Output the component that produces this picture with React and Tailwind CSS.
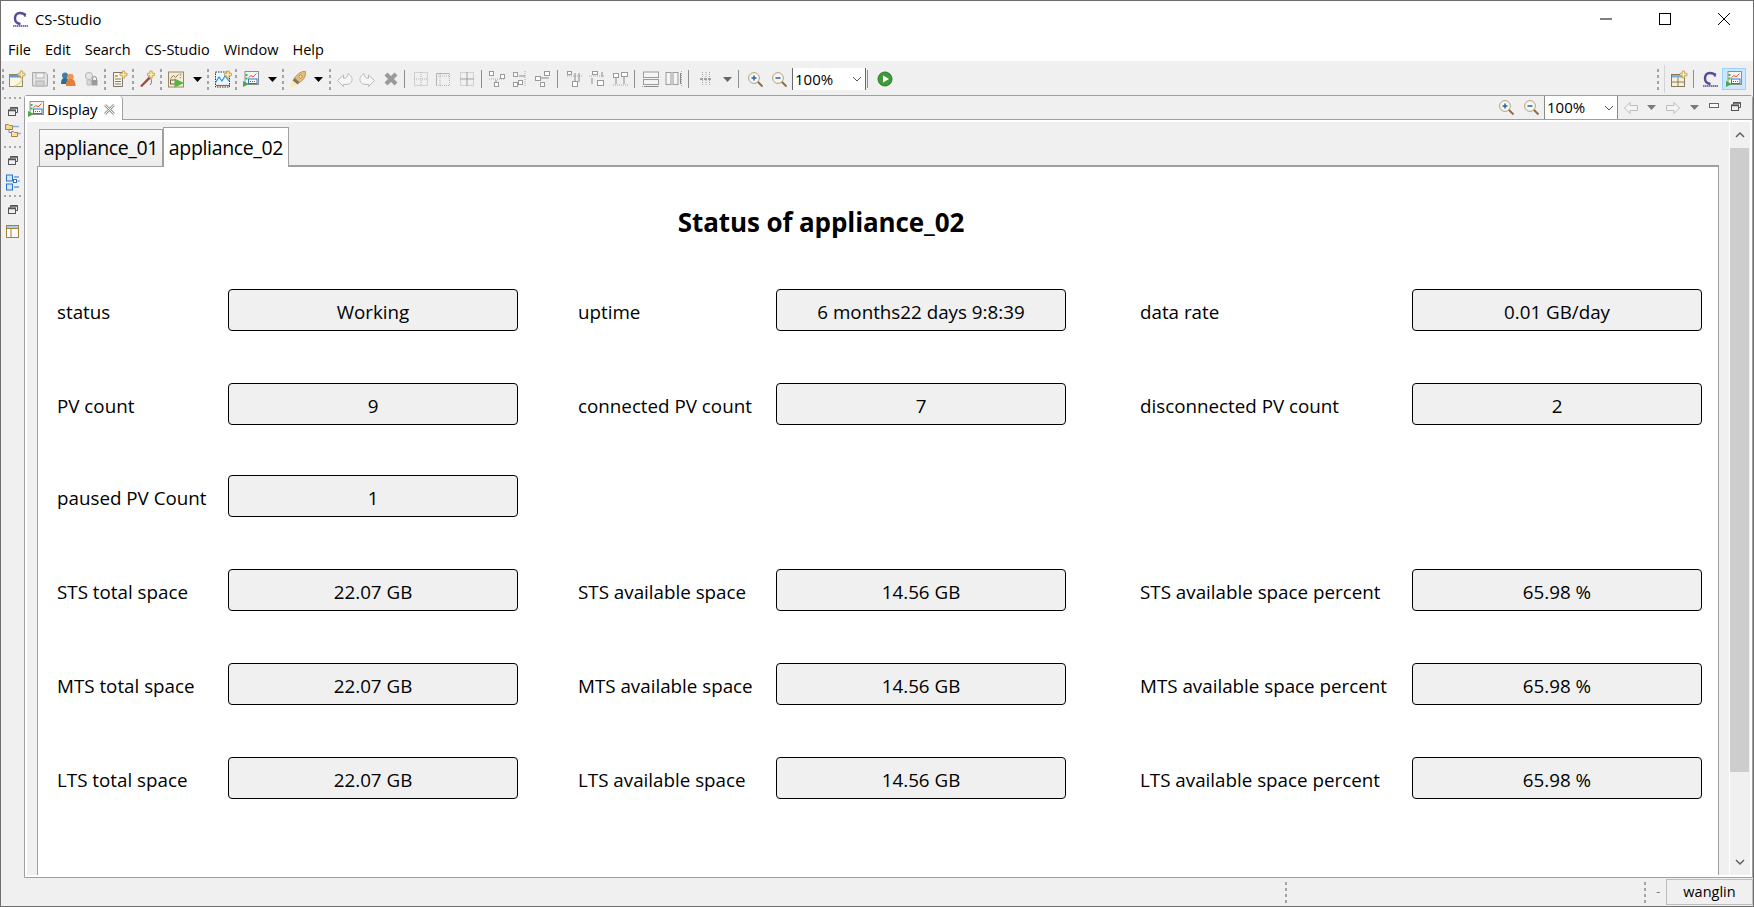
import React from "react";

const F = "font-['Open_Sans',sans-serif]";

function Grip({ className = "" }) {
  return (
    <div className={`flex flex-col shrink-0 items-center justify-center gap-[3px] w-[2px] h-[22px] ${className}`}>
      <div className="w-[2px] h-[3px] bg-[#a3a3a3]" />
      <div className="w-[2px] h-[3px] bg-[#a3a3a3]" />
      <div className="w-[2px] h-[3px] bg-[#a3a3a3]" />
      <div className="w-[2px] h-[3px] bg-[#a3a3a3]" />
    </div>
  );
}
function Sep({ className = "" }) {
  return <div className={`shrink-0 w-[1px] h-[18px] bg-[#8e8e8e] ${className}`} />;
}
function Slot({ className = "", children }) {
  return <div className={`flex shrink-0 items-center justify-center h-[24px] ${className}`}>{children}</div>;
}
function Svg({ children, w = 16, h = 16, vb }) {
  return (
    <svg width={w} height={h} viewBox={vb || `0 0 ${w} ${h}`} className="shrink-0 overflow-visible" fill="none">
      {children}
    </svg>
  );
}
const Star = ({ x = 12, y = 3 }) => (
  <g>
    <path d={`M${x - 1.2} ${y - 3.5}h2.4v2.3h2.3v2.4h-2.3v2.3h-2.4v-2.3h-2.3v-2.4h2.3z`} fill="#f6e9b2" stroke="#c09a3c" strokeWidth="0.8" />
  </g>
);
const NewDisplay = () => (
  <Svg>
    <rect x="0.5" y="3.5" width="13" height="12" fill="#fdf8e4" stroke="#8a8a70" />
    <rect x="1" y="4" width="12" height="2.5" fill="#5d9bd8" />
    <path d="M13 8Q12 13 5 15" stroke="#eed98a" strokeWidth="1.4" />
    <Star x={12.5} y={3.5} />
  </Svg>
);
const Floppy = () => (
  <Svg>
    <path d="M0.5 1.5h13l2 2v11.5h-15z" fill="#e2e2e2" stroke="#a8a8a8" />
    <rect x="4" y="2" width="8" height="5" fill="#f4f4f4" stroke="#b3b3b3" />
    <rect x="4" y="10" width="8" height="5" fill="#d2d2d2" stroke="#b3b3b3" />
  </Svg>
);
const People = () => (
  <Svg>
    <circle cx="5" cy="4.5" r="3" fill="#3e7fa8" />
    <path d="M1 13c0-5 1.5-6 4-6s3.5 1 3.5 6z" fill="#2f6c94" />
    <circle cx="10.5" cy="6" r="3.2" fill="#ee9652" />
    <path d="M6 15c0-6 2-7 4.5-7s5 1 5 7z" fill="#e57f39" />
  </Svg>
);
const PersonLock = () => (
  <Svg>
    <circle cx="6" cy="5" r="3.6" fill="#e6e6e6" stroke="#b3b3b3" />
    <path d="M4 9h4v5H4z" fill="#dadada" stroke="#bdbdbd" />
    <path d="M9.5 9V7.5a2 2 0 014 0V9" stroke="#909090" />
    <rect x="8.5" y="9" width="6" height="5.5" fill="#9b9b9b" />
  </Svg>
);
const NewDoc = () => (
  <Svg>
    <path d="M2.5 1.5h9v14h-9z" fill="#fbf8ea" stroke="#77776a" />
    <path d="M4 5h3M4 8h6M4 10.5h6M4 13h6" stroke="#7b7b6e" />
    <rect x="4" y="4" width="2.5" height="2" fill="#d1a83a" />
    <Star x={12.5} y={3.5} />
  </Svg>
);
const Pen = () => (
  <Svg>
    <path d="M1 15L10 5.5l1.8 1.8L3 16z" fill="#a5483a" />
    <path d="M10 5.5l1.8 1.8" stroke="#6f6f6f" />
    <path d="M12 8c1 2 .5 5-1 6" stroke="#7a7a7a" />
    <Star x={12} y={3.5} />
  </Svg>
);
const RunBox = () => (
  <Svg>
    <rect x="0.5" y="1" width="15" height="15" fill="#f5ecd8" stroke="#9a8662" />
    <path d="M2.5 7.5l3-3 2 2 3-3" stroke="#8a7a58" />
    <rect x="2.5" y="9" width="5" height="4" fill="none" stroke="#6b6248" />
    <path d="M12.5 2.5v2M12.5 6v1" stroke="#a99a72" strokeWidth="1.5" />
    <path d="M6.5 7.5l9.5 4.5-9.5 4.5z" fill="#53b53f" />
  </Svg>
);
const ChartStar = () => (
  <Svg w={17} h={17}>
    <rect x="0.5" y="1" width="14" height="15" fill="#eef5fb" stroke="#333" strokeDasharray="1.5 1" />
    <path d="M1 11l3-5 3 4 3-5 4 5" stroke="#2a8fe0" strokeWidth="1.2" />
    <path d="M1 14.5h14" stroke="#d9483a" strokeWidth="1.2" />
    <Star x={13} y={3.5} />
  </Svg>
);
const DisplayIcon = () => (
  <Svg w={16} h={16}>
    <rect x="2" y="0.5" width="13.5" height="13" fill="#f5f5f5" stroke="#8e8e8e" />
    <path d="M5.5 6.5l2.5-2 2 1.5 3.5-3.5" stroke="#e4562a" />
    <rect x="5.5" y="8" width="8.5" height="4.5" fill="#fff" stroke="#2a76cf" />
    <path d="M7 10.5h1M9 10.5h1M11 10.5h1" stroke="#2a76cf" />
    <rect x="2.5" y="3" width="2" height="2" fill="#3eb33e" />
    <rect x="2.5" y="6.5" width="2" height="2" fill="#3eb33e" />
    <path d="M0 10l6 3-6 3z" fill="#4ba84b" />
  </Svg>
);
const Rocket = () => (
  <Svg>
    <path d="M15.500 .5c.5 3.500-1 8-6 11L4.500 7C8 2 12 0 15.500 .5z" fill="#e6bd77" stroke="#a8854a" strokeWidth="0.8" />
    <circle cx="10.500" cy="5.500" r="1.500" fill="#fff3d6" stroke="#8a6c35" strokeWidth="0.7" />
    <path d="M4.500 7L9.500 11.500l-2 2-5-4z" fill="#7c7468" />
    <path d="M2.500 9.500l5 4c-2.500 2-5 2.500-7 2.500C.5 14 1 11.500 2.500 9.500z" fill="#fbeaae" />
  </Svg>
);
const Undo = ({ flip }) => (
  <Svg>
    <g transform={flip ? "translate(16,0) scale(-1,1)" : undefined}>
      <path d="M.5 9.500L6.500 4v3.500C9 7.500 10.500 6 11 2.500c3.500 2 5 5.500 3.500 8.500-1.500 2.500-4.500 2.500-8 2.500V15.500z" fill="#f6f6f6" stroke="#bcbcbc" />
    </g>
  </Svg>
);
const GrayX = () => (
  <Svg>
    <path d="M3 3l10 10M13 3L3 13" stroke="#9a9a9a" strokeWidth="4.2" />
  </Svg>
);
const D = "#b3b3b3";
const Grid1 = () => (
  <Svg>
    <rect x="1.500" y="1.500" width="13" height="13" stroke={D} strokeDasharray="1 1" />
    <path d="M8 1v14M1 8h14" stroke={D} strokeDasharray="1 1" />
  </Svg>
);
const Grid2 = () => (
  <Svg>
    <path d="M1.500 14V2.500h13" stroke={D} strokeWidth="1" />
    <path d="M1 5h14M5 3v12M14.500 3v12M1 14.500h14" stroke={D} strokeDasharray="1 1" />
  </Svg>
);
const Grid3 = () => (
  <Svg>
    <rect x="1.500" y="1.500" width="13" height="13" stroke={D} strokeDasharray="1 1" />
    <path d="M8 1v14M1 8h14" stroke="#a0a0a0" />
  </Svg>
);
const Al = ({ a, children }) => (
  <Svg>
    {a.map((r, i) => (
      <rect key={i} x={r[0] + 0.5} y={r[1] + 0.5} width={r[2]} height={r[3]} fill="#fff" stroke="#999" />
    ))}
    {children}
  </Svg>
);
const Dash = ({ d }) => <path d={d} stroke="#a8a8a8" strokeDasharray="1 1" />;
const Arr = ({ d }) => <path d={d} stroke="#8a8a8a" />;
const Bar1 = () => (
  <Svg w={18} h={16}>
    <rect x="1.500" y="1" width="15" height="5.500" fill="#f4f4f4" stroke="#9c9c9c" />
    <rect x="1.500" y="8.500" width="15" height="5" fill="#f4f4f4" stroke="#9c9c9c" />
    <Dash d="M0 15.500h18" />
    <Arr d="M2 15.500h14" />
  </Svg>
);
const Bar2 = () => (
  <Svg w={18} h={16}>
    <rect x="1" y="1.500" width="5" height="12" fill="#f4f4f4" stroke="#9c9c9c" />
    <rect x="8" y="1.500" width="5" height="12" fill="#f4f4f4" stroke="#9c9c9c" />
    <Dash d="M16.500 0v16" />
    <Arr d="M15.500 2v11" />
  </Svg>
);
const Center = () => (
  <Svg w={18} h={16}>
    <Dash d="M5.500 1v14M9 1v14M12.500 1v14" />
    <path d="M3 8h12" stroke="#a0a0a0" strokeWidth="2" strokeDasharray="3 1" />
  </Svg>
);
const Drop = ({ c = "#000" }) => (
  <Svg w={9} h={5}>
    <path d="M0 0h9L4.500 5z" fill={c} />
  </Svg>
);
const Mag = ({ plus }) => (
  <Svg w={15} h={15}>
    <path d="M9.500 9.500l5 5" stroke="#8a6b3e" strokeWidth="1.800" />
    <circle cx="6" cy="6" r="5.400" fill="#f6f6f2" stroke="#b5a47a" />
    <path d="M3.500 6h5" stroke="#2f5fa8" strokeWidth="1.500" />
    {plus && <path d="M6 3.500v5" stroke="#2f5fa8" strokeWidth="1.500" />}
  </Svg>
);
const RunCircle = () => (
  <Svg>
    <circle cx="8" cy="8" r="7" fill="#3f9a3a" stroke="#2a7a2a" />
    <path d="M6 4.500L12 8l-6 3.500z" fill="#fff" />
  </Svg>
);
const Logo = ({ s = 17 }) => (
  <Svg w={s} h={s} vb="0 0 17 17">
    <path d="M13.500 4.500C12 2.500 10 2 8 2 4.500 2 3 4.500 3 7.500s1.500 5 5.500 5.500" stroke="#564a9a" strokeWidth="2.400" />
    <path d="M13 2v4" stroke="#564a9a" strokeWidth="1.200" />
    <path d="M1 15h15" stroke="#4a4a9a" strokeWidth="1.500" strokeDasharray="1.500 .5" />
  </Svg>
);
const TableStar = () => (
  <Svg>
    <rect x="0.500" y="3.500" width="13" height="12" fill="#f7f1dc" stroke="#8a7a55" />
    <rect x="1" y="4" width="12" height="2.500" fill="#7db0dd" />
    <path d="M7 6.500v9M1 11h12" stroke="#8a7a55" />
    <Star x={12.500} y={3.500} />
  </Svg>
);
const Restore = () => (
  <Svg w={10} h={9}>
    <path d="M2.500 2.500V.5h7v5H8" stroke="#555" />
    <path d="M2.500 1h7" stroke="#555" strokeWidth="1.500" />
    <rect x="0.500" y="3" width="7" height="5.500" fill="#f0f0f0" stroke="#555" />
    <path d="M0.500 3.500h7" stroke="#555" strokeWidth="1.500" />
  </Svg>
);
const Tree = () => (
  <Svg>
    <path d="M8 3.500h6" stroke="#8fb0d6" strokeWidth="1.500" />
    <path d="M13 10.500h3" stroke="#8fb0d6" strokeWidth="1.500" />
    <path d="M4 5.500v4h2" stroke="#7d8fa8" />
    <path d="M.5 1.500h3l1 1h3v4h-7z" fill="#f2d894" stroke="#a5843c" />
    <path d="M6.500 8.500h2l1 1h3v4h-6z" fill="#f6e4ae" stroke="#a5843c" />
  </Svg>
);
const Outline = () => (
  <Svg w={14} h={16}>
    <rect x="0.500" y="1" width="6" height="6" fill="#d3e6f8" stroke="#2a72c5" />
    <rect x="0.500" y="10" width="6" height="6" fill="#d3e6f8" stroke="#2a72c5" />
    <rect x="7.500" y="5.500" width="3" height="3" fill="#fff" stroke="#2a72c5" />
    <path d="M8 3h5M11.500 7h2M8 13h5" stroke="#2a72c5" />
  </Svg>
);
const Panel = () => (
  <Svg w={13} h={13}>
    <rect x="0.500" y="0.500" width="12" height="12" fill="#fbfbfb" stroke="#a08339" />
    <rect x="1" y="1" width="11" height="2.500" fill="#a9cdea" />
    <path d="M5 3.500v9M1 3.500h11" stroke="#a08339" />
  </Svg>
);
const TrimDots = ({ className = "" }) => (
  <div className={`flex gap-[3px] ${className}`}>
    <div className="w-[2px] h-[2px] bg-[#a8a8a8]" />
    <div className="w-[2px] h-[2px] bg-[#a8a8a8]" />
    <div className="w-[2px] h-[2px] bg-[#a8a8a8]" />
    <div className="w-[2px] h-[2px] bg-[#a8a8a8]" />
  </div>
);
const ArrowOutline = ({ flip }) => (
  <Svg w={14} h={12}>
    <path
      d={flip ? "M13.500 6L8 .5v3H.5v5H8v3z" : "M.5 6L6 .5v3h7.500v5H6v3z"}
      fill="#f4f4f4"
      stroke="#bdbdbd"
    />
  </Svg>
);

function Toolbar() {
  return (
    <div className="flex items-center h-[34px] pt-[2px] bg-[#f0f0f0] shrink-0">
      <Grip className="ml-[1px]" />
      <Slot className="w-[24px] ml-[1px]"><NewDisplay /></Slot>
      <Slot className="w-[22px]"><Floppy /></Slot>
      <Grip className="ml-[2px] mr-[2px]" />
      <Slot className="w-[22px]"><People /></Slot>
      <Slot className="w-[24px]"><PersonLock /></Slot>
      <Grip className="ml-[1px] mr-[1px]" />
      <Slot className="w-[24px]"><NewDoc /></Slot>
      <Grip className="ml-[1px] mr-[1px]" />
      <Slot className="w-[24px]"><Pen /></Slot>
      <Grip className="ml-[1px] mr-[1px]" />
      <Slot className="w-[26px]"><RunBox /></Slot>
      <Slot className="w-[16px]"><Drop /></Slot>
      <Grip className="ml-[2px] mr-[2px]" />
      <Slot className="w-[24px]"><ChartStar /></Slot>
      <Grip />
      <Slot className="w-[28px]"><DisplayIcon /></Slot>
      <Slot className="w-[14px]"><Drop /></Slot>
      <Grip className="ml-[3px] mr-[3px]" />
      <Slot className="w-[22px]"><Rocket /></Slot>
      <Slot className="w-[18px]"><Drop /></Slot>
      <Grip className="ml-[2px] mr-[2px]" />
      <Slot className="w-[24px]"><Undo /></Slot>
      <Slot className="w-[20px]"><Undo flip /></Slot>
      <Slot className="w-[24px] ml-[2px]"><GrayX /></Slot>
      <Sep className="ml-[1px]" />
      <Slot className="w-[32px]"><Grid1 /></Slot>
      <Slot className="w-[12px]"><Grid2 /></Slot>
      <Slot className="w-[24px] ml-[6px]"><Grid3 /></Slot>
      <Sep className="ml-[2px]" />
      <Slot className="w-[22px] ml-[4px]">
        <Al a={[[0, 0, 4, 4], [11, 3, 4, 4], [5, 11, 4, 4]]}><Dash d="M0 8h16" /><Arr d="M7 9v2" /></Al>
      </Slot>
      <Slot className="w-[24px]">
        <Al a={[[1, 1, 4, 4], [6, 9, 4, 4], [1, 11, 4, 4]]}><Dash d="M13 0v16" /><Arr d="M7 5h6" /></Al>
      </Slot>
      <Slot className="w-[22px]">
        <Al a={[[9, 0, 5, 4], [0, 5, 5, 4], [5, 11, 4, 4]]}><Arr d="M6 7h8" /></Al>
      </Slot>
      <Sep className="ml-[3px] mr-[1px]" />
      <Slot className="w-[32px]">
        <Al a={[[0, 0, 4, 3], [5, 10, 5, 5]]}><Dash d="M0 5h16" /><Arr d="M12 2v9M8 2v8" /></Al>
      </Slot>
      <Slot className="w-[12px]">
        <Al a={[[3, 0, 5, 3], [8, 9, 6, 5]]}><Dash d="M0 5h16" /><Arr d="M13 1v5M3 7v6" /></Al>
      </Slot>
      <Slot className="w-[24px] ml-[6px]">
        <Al a={[[8, 1, 6, 4], [0, 2, 5, 4]]}><Dash d="M0 14h16" /><Arr d="M3 7v6M11 6v7" /></Al>
      </Slot>
      <Sep className="ml-[1px] mr-[1px]" />
      <Slot className="w-[30px]"><Bar1 /></Slot>
      <Slot className="w-[16px]"><Bar2 /></Slot>
      <Sep className="ml-[6px] mr-[1px]" />
      <Slot className="w-[32px]"><Center /></Slot>
      <Slot className="w-[10px]"><Drop c="#666" /></Slot>
      <Sep className="ml-[6px] mr-[1px]" />
      <Slot className="w-[30px]"><Mag plus /></Slot>
      <Slot className="w-[18px]"><Mag /></Slot>
      <Combo className="ml-[4px] w-[74px] h-[22px] border-x border-[#6b6b6b]" />
      <Sep className="ml-[1px] mr-[1px]" />
      <Slot className="w-[32px]"><RunCircle /></Slot>
      <div className="flex-1" />
      <Grip />
      <div className="ml-[5px] w-[1px] h-[28px] bg-[#d4d4d4] shrink-0" />
      <Slot className="w-[28px]"><TableStar /></Slot>
      <Sep className="mr-[4px]" />
      <Slot className="w-[24px]"><Logo /></Slot>
      <div className="flex items-center justify-center w-[24px] h-[22px] mr-[7px] bg-[#cce8ff] border border-[#99d1ff] shrink-0">
        <DisplayIcon />
      </div>
    </div>
  );
}
function Combo({ className = "" }) {
  return (
    <div className={`flex items-center justify-between bg-white shrink-0 pl-[2px] pr-[3px] text-[15px] leading-none text-black ${F} ${className}`}>
      <span>100%</span>
      <Svg w={10} h={6}>
        <path d="M1 1l4 4 4-4" stroke="#555" />
      </Svg>
    </div>
  );
}
function Cell({ label, value, labelW, first }) {
  return (
    <div className={`flex items-center shrink-0 ${first}`}>
      <div className={`${labelW} shrink-0 pt-[5px] text-[18.8px] leading-none text-black whitespace-nowrap ${F}`}>{label}</div>
      <div className={`flex items-center justify-center w-[290px] h-[42px] pt-[4px] shrink-0 bg-[#f0f0f0] border border-black rounded-[4px] text-[18.8px] text-black whitespace-nowrap ${F}`}>{value}</div>
    </div>
  );
}
function Row({ a, b, c, className = "" }) {
  return (
    <div className={`flex items-center pl-[19px] ${className}`}>
      <Cell label={a[0]} value={a[1]} labelW="w-[171px]" first="" />
      {b && <Cell label={b[0]} value={b[1]} labelW="w-[198px]" first="ml-[60px]" />}
      {c && <Cell label={c[0]} value={c[1]} labelW="w-[272px]" first="ml-[74px]" />}
    </div>
  );
}

export default function App() {
  return (
    <div className={`flex flex-col w-[1754px] h-[907px] overflow-hidden bg-white border border-[#6e6e6e] ${F}`}>
      <div className="flex items-center h-[30px] pt-[6px] shrink-0 bg-white">
        <div className="ml-[11px] mr-[6px] flex"><Logo /></div>
        <span className="text-[14.800px] text-black leading-none">CS-Studio</span>
        <div className="flex-1" />
        <div className="flex items-center justify-center w-[58px]"><Svg w={12} h={2}><path d="M0 1h12" stroke="#000" /></Svg></div>
        <div className="flex items-center justify-center w-[59px]"><Svg w={12} h={12}><rect x=".5" y=".5" width="11" height="11" stroke="#000" /></Svg></div>
        <div className="flex items-center justify-center w-[59px]"><Svg w={12} h={12}><path d="M0 0l12 12M12 0L0 12" stroke="#000" /></Svg></div>
      </div>
      <div className="flex items-center h-[30px] pt-[9px] shrink-0 bg-white pl-[7px] gap-[14px] text-[14.500px] leading-none text-black">
        <span>File</span><span>Edit</span><span>Search</span><span>CS-Studio</span><span>Window</span><span>Help</span>
      </div>
      <Toolbar />
      <div className="flex flex-1 min-h-0 bg-[#f0f0f0]">
        <div className="flex flex-col items-center w-[23px] shrink-0 pt-[2px]">
          <TrimDots />
          <div className="mt-[8px] flex"><Restore /></div>
          <div className="mt-[7px] flex"><Tree /></div>
          <TrimDots className="mt-[7px]" />
          <div className="mt-[8px] flex"><Restore /></div>
          <div className="mt-[9px] flex"><Outline /></div>
          <TrimDots className="mt-[5px]" />
          <div className="mt-[8px] flex"><Restore /></div>
          <div className="mt-[11px] flex"><Panel /></div>
        </div>
        <div className="flex flex-col flex-1 min-w-0">
          <div className="flex flex-col h-[783px] bg-white border border-[#a0a0a0] rounded-t-[3px]">
            <div className="flex items-stretch h-[24px] shrink-0 bg-[#f0f0f0]">
              <div className="flex items-center w-[98px] pt-[2px] bg-white border-r border-[#a0a0a0] rounded-tr-[4px] pl-[3px] text-[15px] text-black leading-none">
                <DisplayIcon />
                <span className="ml-[3px] mr-[6px]">Display</span>
                <Svg w={11} h={11}>
                  <path d="M1 1l9 9M10 1l-9 9" stroke="#9a9a9a" strokeWidth="2.600" />
                  <path d="M1 1l9 9M10 1l-9 9" stroke="#f5f5f5" strokeWidth="1" />
                </Svg>
              </div>
              <div className="flex-1 flex items-center justify-end border-b border-[#a0a0a0] pr-[11px]">
                <div className="mr-[10px] flex"><Mag plus /></div>
                <div className="mr-[5px] flex"><Mag /></div>
                <Combo className="w-[74px] h-[23px] border-x border-[#8a8a8a]" />
                <div className="ml-[6px] flex"><ArrowOutline /></div>
                <div className="ml-[9px] flex"><Drop c="#7a7a7a" /></div>
                <div className="ml-[10px] flex"><ArrowOutline flip /></div>
                <div className="ml-[10px] flex"><Drop c="#7a7a7a" /></div>
                <div className="ml-[10px] mb-[4px] flex"><Svg w={10} h={5}><rect x=".5" y=".5" width="9" height="4" fill="#f7f7f7" stroke="#666" /></Svg></div>
                <div className="ml-[12px] mb-[3px] flex"><Restore /></div>
              </div>
            </div>
            <div className="flex flex-1 min-h-0 pt-[2px] pl-[2px] pb-[2px] bg-white">
              <div className="flex flex-col flex-1 min-w-0 bg-[#f0f0f0] pl-[10px] pr-[10px]">
                <div className="flex items-end h-[44px] shrink-0 pl-[2px] text-[19.500px] text-black leading-none tracking-[-0.35px]">
                  <div className="flex items-center justify-center w-[124px] h-[37px] bg-gradient-to-b from-[#fafafa] to-[#ececec] border border-b-0 border-[#a0a0a0] shrink-0">appliance_01</div>
                  <div className="flex items-center justify-center w-[126px] h-[40px] mb-[-1px] bg-white border border-b-0 border-[#a0a0a0] shrink-0 relative">appliance_02</div>
                  <div className="flex-1 border-b border-[#a0a0a0]" />
                </div>
                <div className="flex-1 min-h-0 bg-white border-l border-r border-t border-[#a0a0a0]">
                  <div className="flex items-center justify-center h-[71px] mt-[19px] text-[26px] leading-none font-bold text-black tracking-[-0.1px] w-[1566px]">Status of appliance_02</div>
                  <Row className="mt-[32px]" a={["status", "Working"]} b={["uptime", "6 months22 days 9:8:39"]} c={["data rate", "0.01 GB/day"]} />
                  <Row className="mt-[52px]" a={["PV count", "9"]} b={["connected PV count", "7"]} c={["disconnected PV count", "2"]} />
                  <Row className="mt-[50px]" a={["paused PV Count", "1"]} />
                  <Row className="mt-[52px]" a={["STS total space", "22.07 GB"]} b={["STS available space", "14.56 GB"]} c={["STS available space percent", "65.98 %"]} />
                  <Row className="mt-[52px]" a={["MTS total space", "22.07 GB"]} b={["MTS available space", "14.56 GB"]} c={["MTS available space percent", "65.98 %"]} />
                  <Row className="mt-[52px]" a={["LTS total space", "22.07 GB"]} b={["LTS available space", "14.56 GB"]} c={["LTS available space percent", "65.98 %"]} />
                </div>
              </div>
              <div className="flex flex-col w-[21px] shrink-0 bg-[#f0f0f0] border-l border-white mr-[2px]">
                <div className="flex items-center justify-center h-[26px] w-full shrink-0">
                  <Svg w={10} h={6}><path d="M1 5l4-4 4 4" stroke="#606060" strokeWidth="1.500" /></Svg>
                </div>
                <div className="w-[19px] h-[624px] bg-[#cdcdcd] shrink-0" />
                <div className="flex-1" />
                <div className="flex items-center justify-center h-[26px] w-full shrink-0">
                  <Svg w={10} h={6}><path d="M1 1l4 4 4-4" stroke="#606060" strokeWidth="1.500" /></Svg>
                </div>
              </div>
            </div>
          </div>
          <div className="flex items-center flex-1 min-h-0">
            <div className="flex-1" />
            <Grip className="mr-[357px]" />
            <Grip />
            <span className="ml-[10px] text-[12px] leading-none text-[#777]">-</span>
            <div className="ml-[6px] flex items-center justify-center w-[87px] h-[26px] border border-[#bdbdbd] text-[14.500px] leading-none text-black">wanglin</div>
          </div>
        </div>
      </div>
    </div>
  );
}
